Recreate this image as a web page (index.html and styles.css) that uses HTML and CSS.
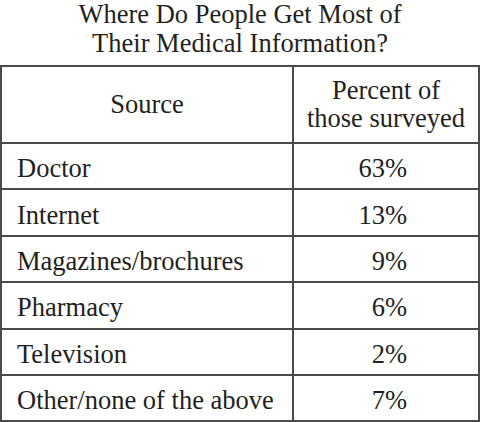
FILE: index.html
```html
<!DOCTYPE html>
<html lang="en">

<head>
    <meta charset="UTF-8">
    <meta name="viewport" content="width=device-width, initial-scale=1.0">
    <title>Medical Information Sources</title>
    <link rel="stylesheet" href="styles.css">
</head>

<body>

    <div class="survey">
        <h1 class="survey-title">Where Do People Get Most of<br>Their Medical Information?</h1>

        <table class="survey-table">
            <thead>
                <tr>
                    <th class="col-source">Source</th>
                    <th class="col-percent">Percent of<br>those surveyed</th>
                </tr>
            </thead>
            <tbody>
                <tr>
                    <td>Doctor</td>
                    <td class="value">63%</td>
                </tr>
                <tr>
                    <td>Internet</td>
                    <td class="value">13%</td>
                </tr>
                <tr>
                    <td>Magazines/brochures</td>
                    <td class="value">9%</td>
                </tr>
                <tr>
                    <td>Pharmacy</td>
                    <td class="value">6%</td>
                </tr>
                <tr>
                    <td>Television</td>
                    <td class="value">2%</td>
                </tr>
                <tr>
                    <td>Other/none of the above</td>
                    <td class="value">7%</td>
                </tr>
            </tbody>
        </table>
    </div>

</body>

</html>
```

FILE: styles.css
```css
/* Basic Reset */
* {
    margin: 0;
    padding: 0;
    box-sizing: border-box;
}

body {
    background: #fff;
    font-family: 'Liberation Serif', 'Times New Roman', serif;
    color: #231f20;
}

/* Title */
.survey-title {
    text-align: center;
    font-size: 26.5px;
    font-weight: normal;
    line-height: 29px;
    margin-bottom: 7px;
}

/* Table */
.survey-table {
    width: 480px;
    border-collapse: collapse;
    font-size: 26.5px;
}

.survey-table th,
.survey-table td {
    border: 2px solid #4a4a4a;
}

.survey-table th {
    font-weight: normal;
    text-align: center;
    height: 77px;
    line-height: 28px;
    padding-bottom: 2px;
}

.col-source {
    width: 292px;
}

.survey-table td {
    height: 46.4px;
    padding-left: 15px;
    padding-top: 4px;
    line-height: 28px;
}

/* Percent column, figures line up on the right */
.survey-table td.value {
    padding-left: 0;
    padding-right: 71px;
    text-align: right;
}
```
